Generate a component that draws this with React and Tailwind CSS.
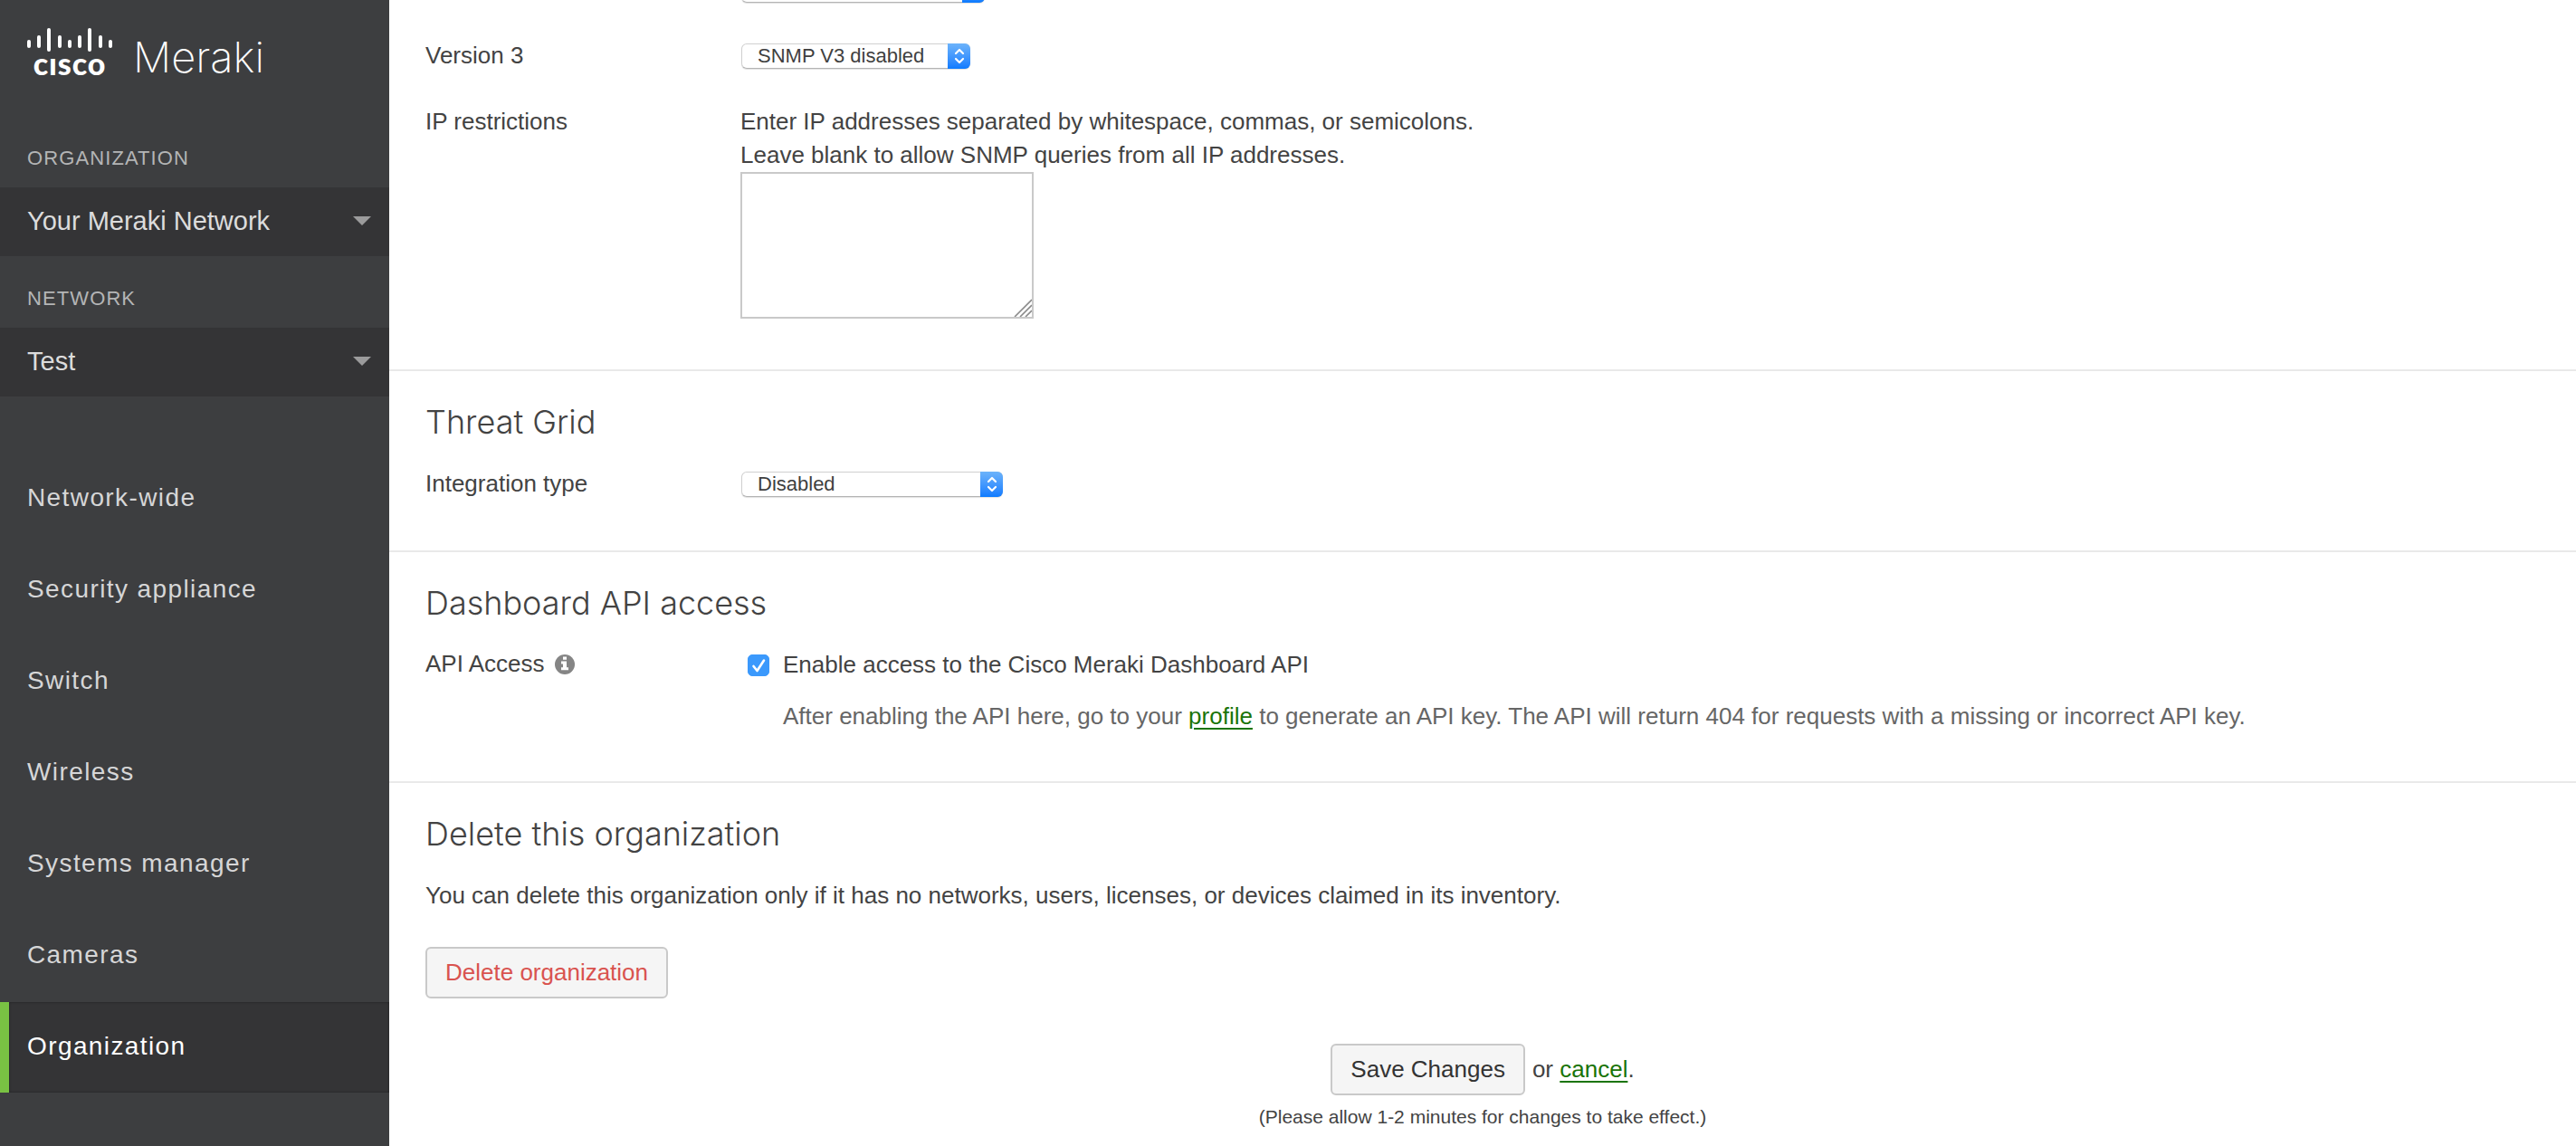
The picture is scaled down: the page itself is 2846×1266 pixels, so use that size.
import { useState } from "react";

const navItems = [
  "Network-wide",
  "Security appliance",
  "Switch",
  "Wireless",
  "Systems manager",
  "Cameras",
  "Organization",
];

function Logo() {
  const bars = [
    [2, 14, 21],
    [13, 9, 21],
    [24, 1, 25],
    [36, 9, 21],
    [47, 14, 21],
    [58, 9, 21],
    [69, 1, 25],
    [81, 9, 21],
    [92, 14, 21],
  ];
  return (
    <div className="flex h-32 items-start px-[30px] pt-[30px] text-white" role="img" aria-label="Cisco Meraki">
      <div className="flex w-[94px] flex-col items-center">
        <svg viewBox="0 0 94 28" className="h-7 w-[94px]" stroke="currentColor" strokeWidth="4" strokeLinecap="round">
          {bars.map(([x, top, bottom]) => (
            <line key={x} x1={x} x2={x} y1={top + 2} y2={bottom} />
          ))}
        </svg>
        <span className="font-['Lato'] text-[34px] leading-6 font-black tracking-wide">cısco</span>
      </div>
      <span className="ml-[23px] font-['Inter'] text-[47px] leading-[66px] font-extralight">Meraki</span>
    </div>
  );
}

function Picker({ label, value }) {
  return (
    <div>
      <div className="px-[30px] pt-8 pb-[17px] text-[22px] leading-[30px] tracking-wider text-[#b4b5b6]">{label}</div>
      <button
        type="button"
        aria-label={label + ": " + value}
        className="flex h-[76px] w-full items-center justify-between bg-[#343436] pr-5 pb-[3px] pl-[30px] text-[29px] leading-9 text-[#dcdcdc]"
      >
        {value}
        <svg viewBox="0 0 20 10" className="h-2.5 w-5" fill="#9b9b9c">
          <path d="M0 0h20L10 10z" />
        </svg>
      </button>
    </div>
  );
}

function Select({ label, id, options, className }) {
  return (
    <div className={"relative ml-px " + className}>
      <select
        id={id}
        aria-label={label}
        className="block h-7 w-full appearance-none rounded-[6px] border border-[#d0d0d0] border-b-[#b4b4b4] bg-white pr-7 pl-[17px] text-[22px] leading-[26px] text-[#3f3f3f] shadow-[0_1px_1px_rgba(0,0,0,0.12)]"
      >
        {options.map((o) => (
          <option key={o}>{o}</option>
        ))}
      </select>
      <span className="pointer-events-none absolute inset-y-0 right-0 flex w-[25px] items-center justify-center rounded-r-[6px] bg-linear-to-b from-[#6cb3fa] to-[#0a7bff]">
        <svg viewBox="0 0 12 18" className="h-[18px] w-3" fill="none" stroke="white" strokeWidth="2.2" strokeLinecap="round" strokeLinejoin="round">
          <path d="M2 6l4-4 4 4M2 12l4 4 4-4" />
        </svg>
      </span>
    </div>
  );
}

function Row({ label, children }) {
  return (
    <div className="grid grid-cols-[348px_1fr]">
      <div className="leading-[37px]">{label}</div>
      <div>{children}</div>
    </div>
  );
}

function Heading({ children }) {
  return <h2 className="mb-[26px] font-['Inter'] text-[36px] leading-[48px] font-light">{children}</h2>;
}

const sectionClass = "border-b-2 border-[#e9e9e9] px-10 pt-8";
const buttonClass = "h-[57px] rounded-[6px] border-2 border-[#c9c9c9] bg-[#f5f5f5] px-5";
const linkClass = "text-[#1a7408] underline decoration-2 underline-offset-4";

export default function App() {
  const [enabled, setEnabled] = useState(true);
  return (
    <div className="flex min-h-screen overflow-hidden bg-white font-['Liberation_Sans',Arial,sans-serif] text-[26px] leading-[37px] text-[#434343]">
      <aside className="w-[430px] shrink-0 bg-[#3d3e40]">
        <Logo />
        <Picker label="ORGANIZATION" value="Your Meraki Network" />
        <Picker label="NETWORK" value="Test" />
        <nav className="mt-[63px] flex flex-col gap-px">
          {navItems.map((item) => {
            const active = item === "Organization";
            return (
              <a
                key={item}
                href="#"
                aria-current={active ? "page" : undefined}
                className={
                  "flex h-[100px] items-center border-l-[10px] pb-0.5 pl-5 text-[28px] leading-9 tracking-wider " +
                  (active
                    ? "border-[#79c143] bg-[#343436] text-white shadow-[inset_0_0_3px_rgba(0,0,0,0.4)]"
                    : "border-transparent text-[#d6d6d7]")
                }
              >
                {item}
              </a>
            );
          })}
        </nav>
      </aside>

      <main className="min-w-0 flex-1">
        <section className="-mt-[30px] flex flex-col gap-9 border-b-2 border-[#e9e9e9] px-10 pb-14">
          <Row label="">
            <div className="flex h-[37px] items-center">
              <Select label="Version 1/2C" options={[""]} className="w-[269px]" />
            </div>
          </Row>
          <Row label={<label htmlFor="snmp-v3">Version 3</label>}>
            <div className="flex h-[37px] items-center">
              <Select id="snmp-v3" label="Version 3" options={["SNMP V3 disabled"]} className="w-[253px]" />
            </div>
          </Row>
          <Row label={<label htmlFor="ip-restrictions">IP restrictions</label>}>
            <p>
              Enter IP addresses separated by whitespace, commas, or semicolons.
              <br />
              Leave blank to allow SNMP queries from all IP addresses.
            </p>
            <div className="relative w-[324px]">
              <textarea id="ip-restrictions" className="block h-[162px] w-full resize-none border-2 border-[#c9c9c9] bg-white p-2" />
              <svg viewBox="0 0 20 20" className="absolute right-0.5 bottom-0.5 size-5" stroke="#8a8a8a" strokeWidth="1.6">
                <path d="M1 20L20 1M7 20L20 7M13 20l7-7" />
              </svg>
            </div>
          </Row>
        </section>

        <section className={sectionClass + " pb-[55px]"}>
          <Heading>Threat Grid</Heading>
          <Row label={<label htmlFor="integration">Integration type</label>}>
            <div className="flex h-[37px] items-center">
              <Select id="integration" label="Integration type" options={["Disabled"]} className="w-[289px]" />
            </div>
          </Row>
        </section>

        <section className={sectionClass + " pb-[53px]"}>
          <Heading>Dashboard API access</Heading>
          <Row
            label={
              <span className="flex items-center gap-[11px] leading-[35px]">
                API Access
                <svg viewBox="0 0 22 22" className="size-[22px]" role="img" aria-label="More information">
                  <circle cx="11" cy="11" r="11" fill="#858585" />
                  <path fill="#fff" d="M9 2.6h4v3.2H9zM7 7.6h6v6.6h2v3H7v-3h2v-3.8H7z" />
                </svg>
              </span>
            }
          >
            <label className="flex items-center gap-[15px] pl-2">
              <span className="relative size-6">
                <input
                  type="checkbox"
                  checked={enabled}
                  onChange={(e) => setEnabled(e.target.checked)}
                  className="block size-6 appearance-none rounded-[5px] border border-[#b4b4b4] bg-white checked:border-[#3b99fc] checked:bg-[#3b99fc]"
                />
                {enabled && (
                  <svg viewBox="0 0 24 24" className="pointer-events-none absolute inset-0 size-6" fill="none" stroke="white" strokeWidth="2.6" strokeLinecap="round" strokeLinejoin="round">
                    <path d="M6.5 13l4 5L18 6.5" />
                  </svg>
                )}
              </span>
              Enable access to the Cisco Meraki Dashboard API
            </label>
            <p className="mt-5 pl-[47px] text-[#666]">
              After enabling the API here, go to your{" "}
              <a href="#" className={linkClass}>profile</a>{" "}
              to generate an API key. The API will return 404 for requests with a missing or incorrect API key.
            </p>
          </Row>
        </section>

        <section className="px-10 pt-8">
          <Heading>Delete this organization</Heading>
          <p>You can delete this organization only if it has no networks, users, licenses, or devices claimed in its inventory.</p>
          <button type="button" className={buttonClass + " mt-[38px] block text-[#d9534f]"}>Delete organization</button>
        </section>

        <footer className="mt-[50px] flex flex-col items-center gap-2">
          <div className="flex items-center gap-2">
            <button type="button" className={buttonClass + " text-[#333]"}>Save Changes</button>
            <span>
              or <a href="#" className={linkClass}>cancel</a>.
            </span>
          </div>
          <p className="text-[21px] leading-8">(Please allow 1-2 minutes for changes to take effect.)</p>
        </footer>
      </main>
    </div>
  );
}
